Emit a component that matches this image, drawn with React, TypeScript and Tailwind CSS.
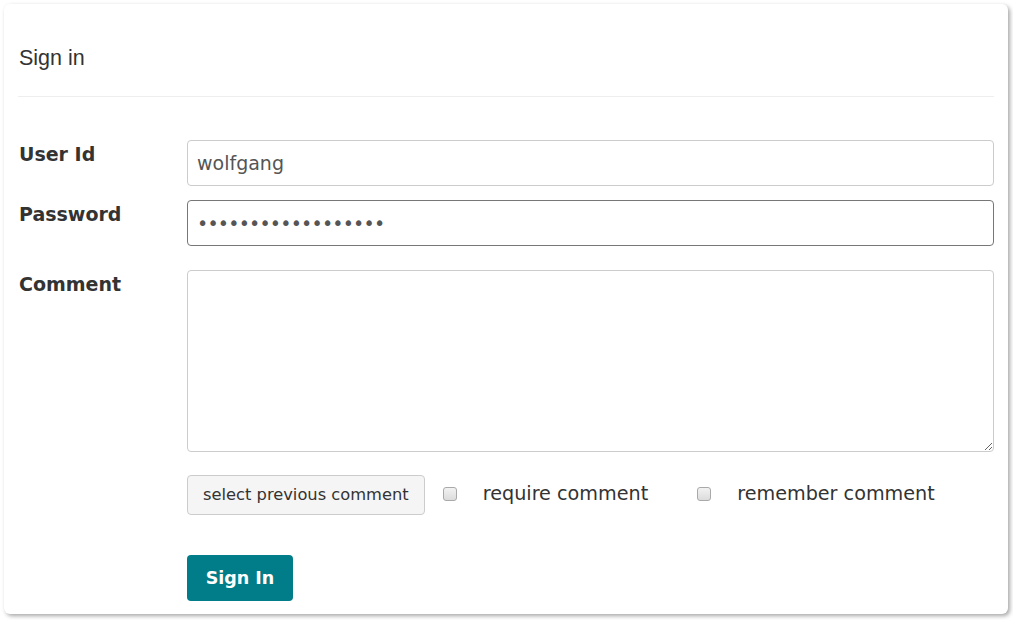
import React from 'react';

const Checkbox = ({ label }: { label: string }) => (
    <label className="flex items-center">
        <span className="w-[14px] h-[14px] rounded-[3px] border border-[#a9a9a9] bg-gradient-to-b from-[#f2f2f2] to-[#dcdcdc]" />
        <span className="ml-[26px] text-[19.2px] leading-[23px] text-[#333]">{label}</span>
    </label>
);

const FieldRow = ({ label, children }: { label: string; children: React.ReactNode }) => (
    <div className="flex">
        <div className="w-[169px] shrink-0 pl-[1px] pt-[3px] text-[19px] leading-[23px] font-bold text-[#333]">{label}</div>
        <div className="flex-1">{children}</div>
    </div>
);

export default function App() {
    return (
        <div className="w-[1013px] h-[620px] bg-white pt-[4px] pl-[4px]" style={{ fontFamily: '"DejaVu Sans", Verdana, sans-serif' }}>
            <div className="w-[1004px] h-[610px] rounded-[6px] bg-white shadow-[2px_2px_4px_rgba(0,0,0,0.35)] px-[14px]">
                {/* Header */}
                <div className="h-[93px] flex items-center border-b border-[#eee] pl-[1px] pt-[16px]">
                    <h1 className="text-[21.5px] text-[#333]" style={{ fontFamily: '"Liberation Sans", Arial, sans-serif' }}>Sign in</h1>
                </div>

                {/* Form */}
                <div className="pt-[43px] flex flex-col">
                    <FieldRow label="User Id">
                        <input
                            readOnly
                            value="wolfgang"
                            className="w-full h-[46px] rounded-[4px] border border-[#ccc] px-[9px] text-[19px] text-[#555] outline-none"
                        />
                    </FieldRow>
                    <div className="mt-[14px]">
                        <FieldRow label="Password">
                            <input
                                readOnly
                                type="password"
                                value="wolfgang123456789x"
                                className="w-full h-[46px] rounded-[4px] border border-[#777] px-[9px] text-[19px] tracking-[-0.8px] text-[#555] outline-none"
                            />
                        </FieldRow>
                    </div>
                    <div className="mt-[24px]">
                        <FieldRow label="Comment">
                            <textarea
                                readOnly
                                className="block w-full h-[182px] rounded-[4px] border border-[#ccc] px-[9px] py-[6px] text-[19px] text-[#555] outline-none"
                            />
                        </FieldRow>
                    </div>

                    {/* Comment options */}
                    <div className="mt-[23px] ml-[169px] flex items-start">
                        <button className="h-[40px] px-[15px] rounded-[4px] border border-[#ccc] bg-[#f5f5f5] text-[16.3px] text-[#333]">
                            select previous comment
                        </button>
                        <div className="ml-[18px] mt-[7px]">
                            <Checkbox label="require comment" />
                        </div>
                        <div className="ml-[49px] mt-[7px]">
                            <Checkbox label="remember comment" />
                        </div>
                    </div>

                    <div className="mt-[40px] ml-[169px]">
                        <button className="h-[46px] w-[106px] rounded-[4px] bg-[#017d89] text-white text-[17.5px] font-bold">
                            Sign In
                        </button>
                    </div>
                </div>
            </div>
        </div>
    );
}
